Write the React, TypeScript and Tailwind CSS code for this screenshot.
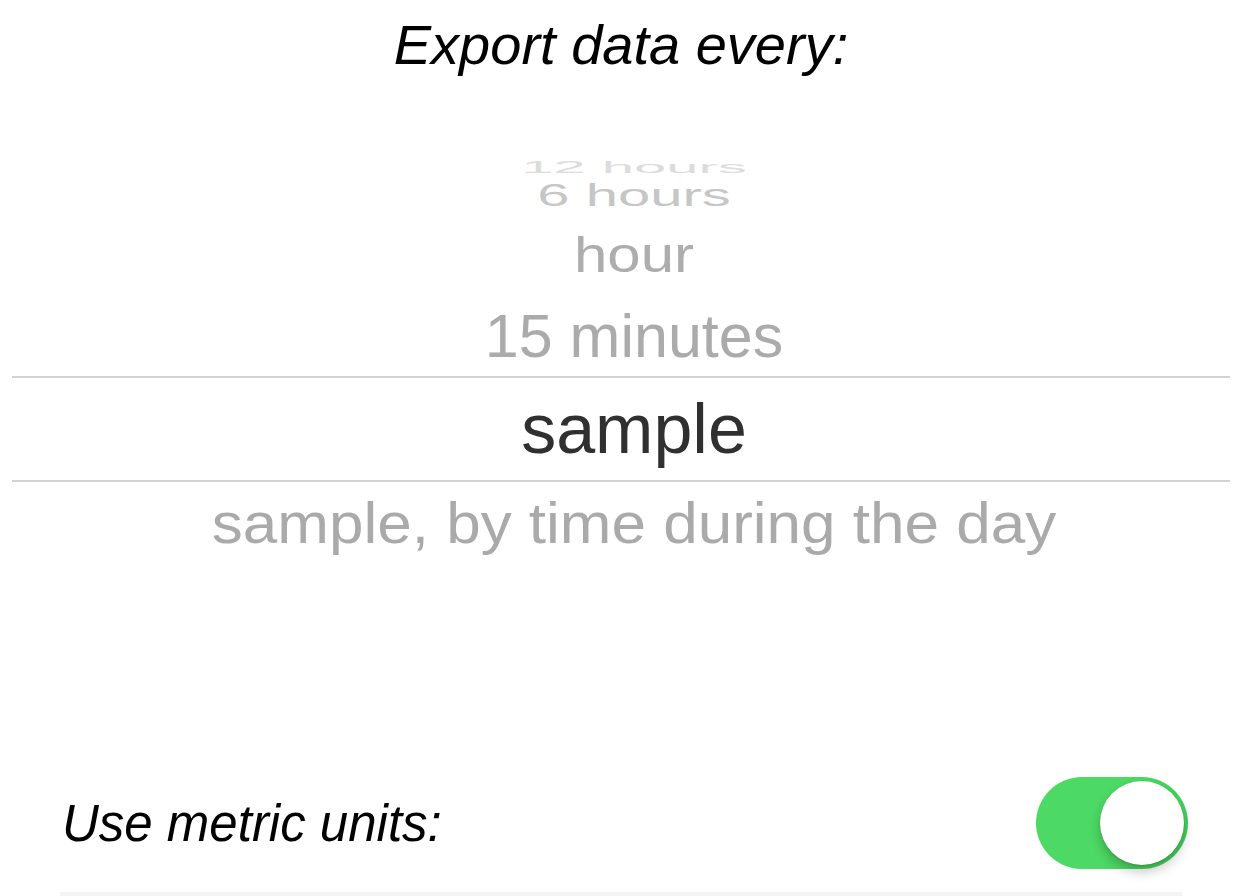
import React from 'react'

type Row = {
  label: string
  height: string
  text: string
  pad?: string
}

// rows above the selection band, top to bottom (wheel squashes them towards the top)
const above: Row[] = [
  { label: '12 hours', height: 'h-[12px]', text: 'text-[58px] text-[#dcdcdc] scale-y-[0.28] translate-y-[3px]' },
  { label: '6 hours', height: 'h-[50px]', text: 'text-[58px] text-[#c6c6c6] scale-y-[0.55]' },
  { label: 'hour', height: 'h-[70px]', text: 'text-[60px] text-[#adadad] scale-y-[0.84]' },
  { label: '15 minutes', height: 'h-[86px]', text: 'text-[61px] text-[#ababab]', pad: 'pt-[6px]' },
]

function Picker() {
  return (
    <div className="mt-[85px] flex flex-col overflow-hidden">
      {above.map((row) => (
        <div key={row.label} className={`${row.height} ${row.pad ?? ''} pl-[26px] flex items-center justify-center`}>
          <span className={`block leading-none whitespace-nowrap ${row.text}`}>{row.label}</span>
        </div>
      ))}
      <div className="mx-[12px] h-[2px] bg-[#d2d2d2]" />
      <div className="h-[102px] pl-[26px] flex items-center justify-center">
        <span className="block leading-none text-[70px] text-[#303030]">sample</span>
      </div>
      <div className="mx-[12px] h-[2px] bg-[#d2d2d2]" />
      <div className="h-[82px] pl-[26px] flex items-center justify-center">
        <span className="block leading-none whitespace-nowrap text-[62px] text-[#aaaaaa] scale-y-[0.93]">
          sample, by time during the day
        </span>
      </div>
    </div>
  )
}

function Toggle({ on }: { on: boolean }) {
  return (
    <div
      className={`relative w-[152px] h-[92px] rounded-full flex items-center pr-[4px] ${
        on ? 'justify-end bg-[linear-gradient(90deg,#4dd966,#4cd964_60%,#45cf5c)]' : 'justify-start bg-[#e5e5e5]'
      }`}
    >
      <div className="w-[84px] h-[84px] rounded-full bg-white shadow-[0_7px_12px_rgba(0,0,0,0.22),0_1px_2px_rgba(0,0,0,0.15)]" />
    </div>
  )
}

export default function App() {
  return (
    <div className="w-[1242px] h-[896px] bg-white overflow-hidden font-['Liberation_Sans',Arial,sans-serif]">
      <div className="pt-[17px] text-center italic text-[56px] leading-none text-black">Export data every:</div>
      <Picker />
      <div className="mt-[213px] h-[92px] flex items-center justify-between pl-[62px] pr-[54px]">
        <span className="italic text-[51px] leading-none text-black">Use metric units:</span>
        <Toggle on />
      </div>
      <div className="mt-[23px] ml-[60px] w-[1122px] h-[4px] bg-[#f4f4f4]" />
    </div>
  )
}
